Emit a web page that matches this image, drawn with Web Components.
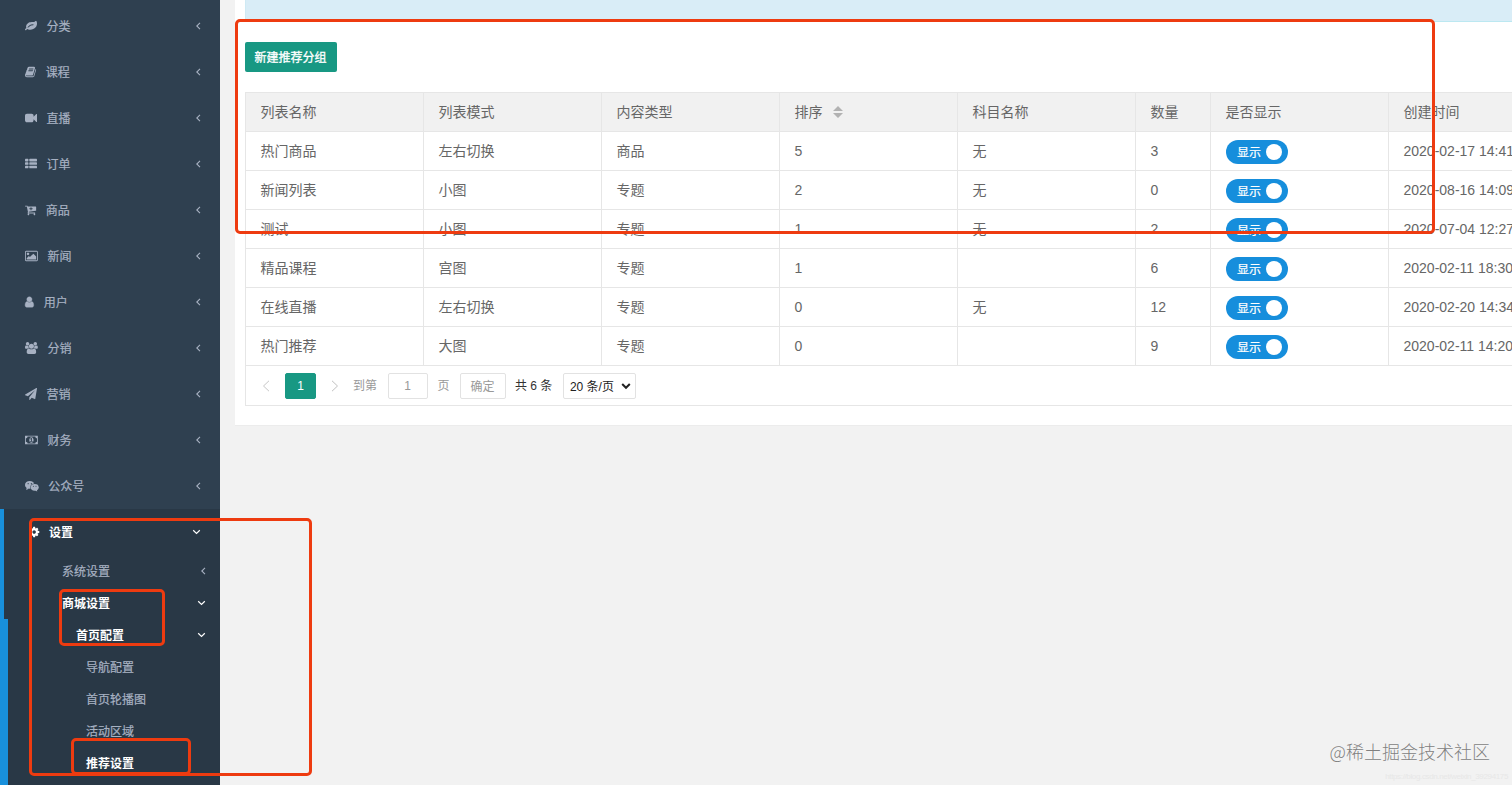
<!DOCTYPE html>
<html lang="zh-CN">
<head>
<meta charset="utf-8">
<title>推荐设置</title>
<style>
    html, body {
        margin: 0;
        height: 100%;
        overflow: hidden;
    }
    body {
        position: relative;
        background: #f2f2f2;
        font-family: "Liberation Sans", "Noto Sans CJK SC", sans-serif;
        font-size: 14px;
        color: #666;
    }
</style>
</head>
<body>
<admin-layout>
    <side-bar slot="side">
        <nav-item icon="leaf">分类</nav-item>
        <nav-item icon="book">课程</nav-item>
        <nav-item icon="video">直播</nav-item>
        <nav-item icon="list">订单</nav-item>
        <nav-item icon="cart">商品</nav-item>
        <nav-item icon="image">新闻</nav-item>
        <nav-item icon="user">用户</nav-item>
        <nav-item icon="group">分销</nav-item>
        <nav-item icon="plane">营销</nav-item>
        <nav-item icon="money">财务</nav-item>
        <nav-item icon="wechat">公众号</nav-item>
        <nav-group>
            <nav-item icon="gear" open>设置</nav-item>
            <sub-item level="1" arrow="left">系统设置</sub-item>
            <sub-item level="1" arrow="down" active>商城设置</sub-item>
            <nav-group nested slot="nested">
                <sub-item level="2" arrow="down" active>首页配置</sub-item>
                <sub-item level="3">导航配置</sub-item>
                <sub-item level="3">首页轮播图</sub-item>
                <sub-item level="3">活动区域</sub-item>
                <sub-item level="3" active>推荐设置</sub-item>
            </nav-group>
        </nav-group>
    </side-bar>
    <content-panel>
        <main-button>新建推荐分组</main-button>
        <data-table></data-table>
        <page-bar></page-bar>
    </content-panel>
</admin-layout>
<mark-box style="left:235px;top:19px;width:1200px;height:215px"></mark-box>
<mark-box style="left:29px;top:518px;width:283px;height:258px"></mark-box>
<mark-box style="left:59px;top:589px;width:106px;height:57px"></mark-box>
<mark-box style="left:71px;top:738px;width:120px;height:37px"></mark-box>
<water-mark></water-mark>

<script>
// [advance width, viewBox x, markup], all on a 1792 high grid
const icons = {
    leaf: [1792, 0, '<path d="M1280 704q0-26-19-45t-45-19q-172 0-318 49.500t-259.500 134-235.500 219.500q-19 21-19 45 0 26 19 45t45 19q24 0 45-19 27-24 74-71t67-66q137-124 268.500-176t313.500-52q26 0 45-19t19-45zm512-198q0 95-20 193-46 224-184.500 383t-357.500 268q-214 108-438 108-148 0-286-47-15-5-88-42t-96-37q-16 0-39.500 32t-45 70-52.500 70-60 32q-43 0-63.500-17.500t-45.500-59.500q-2-4-6-11t-5.500-10-3-9.500-1.500-13.500q0-35 31-73.500t68-65.500 68-56 31-48q0-4-14-38t-16-44q-9-51-9-104 0-115 43.500-220t119-184.500 170.500-139 204-95.500q55-18 145-25.500t179.500-9 178.500-6 163.500-24 113.500-56.500l29.500-29.500 29.500-28 27-20 36.500-16 43.500-4.500q39 0 70.500 46t47.500 112 24 124 8 96z"/>'],
    book: [1664, 64, '<path d="M1703 478q40 57 18 129l-275 906q-19 64-76.500 107.500t-122.500 43.500h-923q-77 0-148.500-53.500t-99.500-131.500q-24-67-2-127 0-4 3-27t4-37q1-8-3-21.500t-3-19.500q2-11 8-21t16.500-23.500 16.500-23.500q23-38 45-91.500t30-91.500q3-10 .5-30t-.5-28q3-11 17-28t17-23q21-36 42-92t25-90q1-9-2.500-32t.5-28q4-13 22-30.500t22-22.500q19-26 42.500-84.500t27.500-96.500q1-8-3-25.500t-2-26.500q2-8 9-18t18-23 17-21q8-12 16.500-30.500t15-35 16-36 19.500-32 26.500-23.500 36-11.500 47.500 5.500l-1 3q38-9 51-9h761q74 0 114 56t18 130l-274 906q-36 119-71.500 153.500t-128.500 34.500h-869q-27 0-38 15-11 16-1 43 24 70 144 70h923q29 0 56-15.500t35-41.500l300-987q7-22 5-57 38 15 59 43zm-1064 2q-4 13 2 22.500t20 9.500h608q13 0 25.500-9.500t16.500-22.500l21-64q4-13-2-22.500t-20-9.500h-608q-13 0-25.500 9.500t-16.500 22.500zm-83 256q-4 13 2 22.500t20 9.500h608q13 0 25.500-9.500t16.500-22.500l21-64q4-13-2-22.500t-20-9.500h-608q-13 0-25.500 9.500t-16.500 22.500z"/>'],
    video: [1792, 0, '<path d="M1792 352v1088q0 42-39 59-13 5-25 5-27 0-45-19l-403-403v166q0 119-84.500 203.500t-203.500 84.500h-704q-119 0-203.500-84.500t-84.500-203.500v-704q0-119 84.500-203.500t203.500-84.500h704q119 0 203.500 84.500t84.500 203.500v165l403-402q18-19 45-19 12 0 25 5 39 17 39 59z"/>'],
    list: [1792, 0, '<rect y="128" width="512" height="384" rx="96"/><rect y="640" width="512" height="384" rx="96"/><rect y="1152" width="512" height="384" rx="96"/><rect x="640" y="128" width="1152" height="384" rx="96"/><rect x="640" y="640" width="1152" height="384" rx="96"/><rect x="640" y="1152" width="1152" height="384" rx="96"/>'],
    cart: [1664, 64, '<path d="M1216 704q0-26-19-45t-45-19h-128v-128q0-26-19-45t-45-19-45 19-19 45v128h-128q-26 0-45 19t-19 45 19 45 45 19h128v128q0 26 19 45t45 19 45-19 19-45v-128h128q26 0 45-19t19-45zm-512 832q0 53-37.500 90.500t-90.500 37.500-90.500-37.500-37.500-90.500 37.500-90.500 90.500-37.500 90.500 37.500 37.500 90.500zm896 0q0 53-37.500 90.500t-90.500 37.500-90.500-37.500-37.500-90.500 37.500-90.500 90.500-37.500 90.500 37.500 37.500 90.500zm128-1088v512q0 24-16 42.500t-41 21.500l-1044 122q1 7 4.500 21.500t6 26.500 2.500 22q0 16-24 64h920q26 0 45 19t19 45-19 45-45 19h-1024q-26 0-45-19t-19-45q0-14 11-39.500t29.500-59.500 20.500-38l-177-823h-204q-26 0-45-19t-19-45 19-45 45-19h256q16 0 28.500 6.500t20 15.500 13 24.500 7.500 26.500 5.500 29.500 4.500 25.500h1201q26 0 45 19t19 45z"/>'],
    image: [1920, -64, '<path d="M576 576q0 80-56 136t-136 56-136-56-56-136 56-136 136-56 136 56 56 136zm1024 384v448h-1408v-192l320-320 160 160 512-512zm96-704h-1600q-13 0-22.500 9.500t-9.500 22.500v1216q0 13 9.500 22.500t22.500 9.500h1600q13 0 22.500-9.500t9.500-22.500v-1216q0-13-9.500-22.500t-22.500-9.500zm160 32v1216q0 66-47 113t-113 47h-1600q-66 0-113-47t-47-113v-1216q0-66 47-113t113-47h1600q66 0 113 47t47 113z"/>'],
    user: [1370, 240, '<path d="M1536 1399q0 109-62.500 187t-150.500 78h-854q-88 0-150.500-78t-62.500-187q0-85 8.500-160.500t31.500-152 58.500-131 94-89 134.500-34.500q131 128 313 128t313-128q76 0 134.500 34.500t94 89 58.500 131 31.500 152 8.500 160.500zm-256-887q0 159-112.500 271.500t-271.500 112.500-271.500-112.500-112.500-271.500 112.500-271.500 271.500-112.500 271.500 112.500 112.500 271.500z" stroke="currentColor" stroke-width="60"/>'],
    group: [1920, -64, '<path d="M529 896q-162 5-265 128h-134q-82 0-138-40.500t-56-118.500q0-353 124-353 6 0 43.500 21t97.500 42.500 119 21.500q67 0 133-23-5 37-5 66 0 139 81 256zm1071 637q0 120-73 189.500t-194 69.500h-874q-121 0-194-69.500t-73-189.500q0-53 3.500-103.500t14-109 26.500-108.500 43-97.500 62-81 85.500-53.500 111.500-20q10 0 43 21.500t73 48 107 48 135 21.500 135-21.500 107-48 73-48 43-21.500q61 0 111.500 20t85.500 53.500 62 81 43 97.500 26.500 108.500 14 109 3.500 103.500zm-1024-1277q0 106-75 181t-181 75-181-75-75-181 75-181 181-75 181 75 75 181zm704 384q0 159-112.500 271.500t-271.500 112.500-271.500-112.500-112.500-271.500 112.500-271.500 271.500-112.500 271.500 112.500 112.500 271.500zm576 225q0 78-56 118.500t-138 40.500h-134q-103-123-265-128 81-117 81-256 0-29-5-66 66 23 133 23 59 0 119-21.500t97.500-42.500 43.500-21q124 0 124 353zm-128-609q0 106-75 181t-181 75-181-75-75-181 75-181 181-75 181 75 75 181z"/>'],
    plane: [1792, 0, '<path d="M1764 11q33 24 27 64l-256 1536q-5 29-32 45-14 8-31 8-11 0-24-5l-453-185-242 295q-18 23-49 23-13 0-22-4-19-7-30.500-23.500t-11.500-36.500v-349l864-1059-1069 925-395-162q-37-14-40-55-2-40 32-59l1664-960q15-9 32-9 20 0 36 11z"/>'],
    money: [1920, -64, '<path d="M704 1152h384v-96h-128v-448h-114l-148 137 77 80q42-37 55-57h2v288h-128v96zm512-256q0 70-21 142t-59.500 134-101.500 101-138 39-138-39-101.500-101-59.500-134-21-142 21-142 59.500-134 101.500-101 138-39 138 39 101.500 101 59.500 134 21 142zm512 256v-512q-106 0-181-75t-75-181h-1152q0 106-75 181t-181 75v512q106 0 181 75t75 181h1152q0-106 75-181t181-75zm128-832v1152q0 26-19 45t-45 19h-1792q-26 0-45-19t-19-45v-1152q0-26 19-45t45-19h1792q26 0 45 19t19 45z"/>'],
    wechat: [2048, 0, '<ellipse cx="705" cy="730" rx="705" ry="590"/><path d="M250 1120l-70 380 400-210z"/><ellipse cx="1450" cy="1090" rx="655" ry="570" fill="#2f4050"/><ellipse cx="1450" cy="1090" rx="598" ry="505"/><path d="M1500 1550l330 170-60-300z"/><g fill="#2f4050"><circle cx="470" cy="550" r="90"/><circle cx="950" cy="550" r="90"/><circle cx="1250" cy="950" r="75"/><circle cx="1640" cy="950" r="75"/></g>'],
    gear: [1536, 128, '<path d="M1152 896q0-106-75-181t-181-75-181 75-75 181 75 181 181 75 181-75 75-181zm512-109v222q0 12-8 23t-20 13l-185 28q-19 54-39 91 35 50 107 138 10 12 10 25t-9 23q-27 37-99 108t-94 71q-12 0-26-9l-138-108q-44 23-91 38-16 136-29 186-7 28-36 28h-222q-14 0-24.500-8.500t-11.500-21.500l-28-184q-49-16-90-37l-141 107q-10 9-25 9-14 0-25-11-126-114-165-168-7-10-7-23 0-12 8-23 15-21 51-66.500t54-70.500q-27-50-41-99l-183-27q-13-2-21-12.500t-8-23.500v-222q0-12 8-23t19-13l186-28q14-46 39-92-40-57-107-138-10-12-10-24 0-10 9-23 26-36 98.500-107.500t94.500-71.500q13 0 26 10l138 107q44-23 91-38 16-136 29-186 7-28 36-28h222q14 0 24.500 8.500t11.500 21.500l28 184q49 16 90 37l142-107q9-9 24-9 13 0 25 10 129 119 165 170 7 8 7 22 0 12-8 23-15 21-51 66.500t-54 70.500q26 50 41 98l183 28q13 2 21 12.500t8 23.500z"/>']
};

function arrow(dir) {
    if (dir === 'left') {
        return '<svg class="arrow" width="8" height="10" viewBox="0 0 8 10"><path d="M6 1.800 2.800 5 6 8.200" fill="none" stroke="currentColor" stroke-width="1.100"/></svg>';
    }
    return '<svg class="arrow" width="9" height="10" viewBox="0 0 9 10"><path d="M1.200 3.200 4.500 6.400 7.800 3.200" fill="none" stroke="currentColor" stroke-width="1.200"/></svg>';
}

function define(name, html) {
    customElements.define(name, class extends HTMLElement {
        constructor() {
            super();
            this.attachShadow({mode: 'open'}).innerHTML = typeof html === 'function' ? html(this) : html;
        }
    });
}

define('admin-layout', `
    <style>
        :host { display: flex; width: 1512px; height: 785px; overflow: hidden; }
        main { flex: 1; min-width: 0; padding-left: 15px; }
    </style>
    <slot name="side"></slot>
    <main><slot></slot></main>
`);

define('side-bar', `
    <style>
        :host {
            display: flex;
            flex-direction: column;
            flex: none;
            box-sizing: border-box;
            width: 220px;
            padding-top: 3px;
            background: #2f4050;
            color: #a7b1c2;
            font-size: 12px;
            -webkit-text-stroke: .2px;
        }
    </style>
    <slot></slot>
`);

define('nav-group', `
    <style>
        :host { display: block; flex: 1; background: #293846; border-left: 4px solid #1890dc; }
        :host([nested]) { height: 200px; }
    </style>
    <slot></slot><slot name="nested"></slot>
`);

define('nav-item', el => {
    const [w, x, body] = icons[el.getAttribute('icon')];
    const open = el.hasAttribute('open');
    return `
    <style>
        :host { display: flex; flex: none; align-items: center; height: 46px; padding: 0 18px 0 25px; }
        :host([open]) { color: #fff; font-weight: 700; padding-right: 19px; -webkit-text-stroke: 0; }
        .icon { margin-right: 9.600px; flex: none; }
        .label { flex: 1; line-height: 18px; padding-top: 2px; }
        .arrow { flex: none; }
    </style>
    <svg class="icon" width="${w * 12 / 1792}" height="12" viewBox="${x} 0 ${w} 1792" fill="currentColor" overflow="visible">${body}</svg>
    <span class="label"><slot></slot></span>${arrow(open ? 'down' : 'left')}`;
});

define('sub-item', el => `
    <style>
        :host { display: flex; align-items: center; height: 32px; padding-right: 14px; }
        :host([level="1"]) { padding-left: 58px; }
        :host([level="2"]) { padding-left: 68px; }
        :host([level="3"]) { padding-left: 78px; }
        :host([active]) { color: #fff; font-weight: 700; -webkit-text-stroke: 0; }
        :host([arrow="left"]) { padding-right: 13px; }
        .label { flex: 1; line-height: 18px; padding-top: 2px; }
        .arrow { margin-bottom: 1px; }
    </style>
    <span class="label"><slot></slot></span>${el.hasAttribute('arrow') ? arrow(el.getAttribute('arrow')) : ''}
`);

define('content-panel', `
    <style>
        :host { display: block; height: 425px; padding-left: 10px; background: #fff; overflow: hidden; border-bottom: 1px solid #ececec; }
        .alert { height: 21px; background: #d9edf7; border-bottom: 1px solid #bce8f1; border-left: 1px solid #cfeaf4; margin-bottom: 20px; }
    </style>
    <div class="alert"></div>
    <slot></slot>
`);

define('main-button', `
    <style>
        :host {
            display: flex;
            align-items: center;
            justify-content: center;
            box-sizing: border-box;
            width: 92px;
            height: 30px;
            padding: 0 1px 2px 0;
            margin-bottom: 20px;
            background: #189883;
            border-radius: 2px;
            color: #fff;
            font-size: 12px;
            -webkit-text-stroke: .3px;
        }
    </style>
    <slot></slot>
`);

define('switch-on', `
    <style>
        :host {
            display: flex;
            align-items: center;
            justify-content: space-between;
            box-sizing: border-box;
            width: 62px;
            height: 24px;
            padding: 0 6px 0 11px;
            border-radius: 12px;
            background: #168edc;
            color: #fff;
            font-size: 12px;
            -webkit-text-stroke: .2px;
        }
        span { padding-bottom: 2px; }
        i { width: 16px; height: 16px; border-radius: 50%; background: #fff; }
    </style>
    <span><slot></slot></span><i></i>
`);

const head = ['列表名称', '列表模式', '内容类型', '排序', '科目名称', '数量', '是否显示', '创建时间'];
const rows = [
    ['热门商品', '左右切换', '商品', 5, '无', 3, '2020-02-17 14:41'],
    ['新闻列表', '小图', '专题', 2, '无', 0, '2020-08-16 14:09'],
    ['测试', '小图', '专题', 1, '无', 2, '2020-07-04 12:27'],
    ['精品课程', '宫图', '专题', 1, '', 6, '2020-02-11 18:30'],
    ['在线直播', '左右切换', '专题', 0, '无', 12, '2020-02-20 14:34'],
    ['热门推荐', '大图', '专题', 0, '', 9, '2020-02-11 14:20']
];

define('data-table', () => {
    const sort = '<svg width="10" height="12" viewBox="0 0 10 12" fill="#b2b2b2"><path d="M0 5 5 0l5 5zM0 7h10l-5 5z"/></svg>';
    const ths = head.map(h => `<div>${h}${h === '排序' ? sort : ''}</div>`).join('');
    const trs = rows.map(r => {
        const cells = r.map(c => `<div${/\d/.test(c) ? ' class="num"' : ''}>${c}</div>`);
        cells.splice(6, 0, '<div class="switch"><switch-on>显示</switch-on></div>');
        return `<div class="row">${cells.join('')}</div>`;
    }).join('');
    return `
    <style>
        :host { display: block; width: 1420px; border: 1px solid #e6e6e6; border-bottom: 0; border-right: 0; }
        .row {
            display: grid;
            grid-template-columns: repeat(5, 178px) 75px 178px 260px;
            height: 38px;
            border-bottom: 1px solid #e6e6e6;
        }
        .row > div {
            display: flex;
            align-items: center;
            padding: 0 0 2px 14.500px;
            border-right: 1px solid #e6e6e6;
            white-space: nowrap;
        }
        .row > .num { padding-bottom: 0; }
        .row > .switch { padding: 2px 0 0 15px; }
        .head { background: #f1f1f1; }
        svg { margin: 2px 0 0 10px; }
    </style>
    <div class="row head">${ths}</div>${trs}`;
});

define('page-bar', `
    <style>
        :host {
            display: flex;
            align-items: center;
            box-sizing: border-box;
            width: 1420px;
            height: 40px;
            padding-left: 16px;
            border-left: 1px solid #e6e6e6;
            border-bottom: 1px solid #e6e6e6;
            font-size: 12px;
            color: #999;
        }
        .box {
            display: flex;
            align-items: center;
            justify-content: center;
            box-sizing: border-box;
            height: 26px;
            border: 1px solid #e2e2e2;
            border-radius: 2px;
        }
        .cur { width: 31px; background: #189883; border-color: #189883; color: #fff; margin: 0 15px 0 15px; }
        .num { width: 40px; margin: 0 10px 0 10.500px; }
        .ok { width: 46px; margin: 0 9.500px 0 10px; }
        .total { color: #333; }
        .limit { width: 73px; margin-left: 10.500px; color: #222; justify-content: space-between; padding: 0 4px 0 6px; }
        .to { margin-left: 14px; }
        .up { padding-bottom: 2px; }
    </style>
    <svg width="8" height="12" viewBox="0 0 8 12"><path d="M7 .8 1.500 6 7 11.200" fill="none" stroke="#c6c6c6"/></svg>
    <span class="box cur">1</span>
    <svg width="8" height="12" viewBox="0 0 8 12"><path d="M1 .8 6.500 6 1 11.200" fill="none" stroke="#c0c0c0"/></svg>
    <span class="to up">到第</span><span class="box num">1</span><span class="up">页</span>
    <span class="box ok">确定</span>
    <span class="total up">共 6 条</span>
    <span class="box limit">20 条/页<svg width="10" height="8" viewBox="0 0 10 8"><path d="M1.200 2 5 5.800 8.800 2" fill="none" stroke="#222" stroke-width="2"/></svg></span>
`);

// highlight frame, floats over the page
define('mark-box', `
    <style>
        :host { position: absolute; box-sizing: border-box; border: 3px solid #ee3b10; border-radius: 5px; }
    </style>
`);

define('water-mark', `
    <style>
        :host { position: absolute; right: 4px; bottom: 3px; white-space: nowrap; text-align: right; }
        .name { font: 300 18px/26px "Noto Sans CJK SC", sans-serif; color: #808080; margin: 0 18px 8px 0; text-shadow: 0 0 1px #fff; }
        .url { font-size: 8px; line-height: 10px; letter-spacing: -.36px; color: #e7e7e7; }
    </style>
    <div class="name">@稀土掘金技术社区</div>
    <div class="url">https://blog.csdn.net/weixin_39294175</div>
`);
</script>
</body>
</html>
